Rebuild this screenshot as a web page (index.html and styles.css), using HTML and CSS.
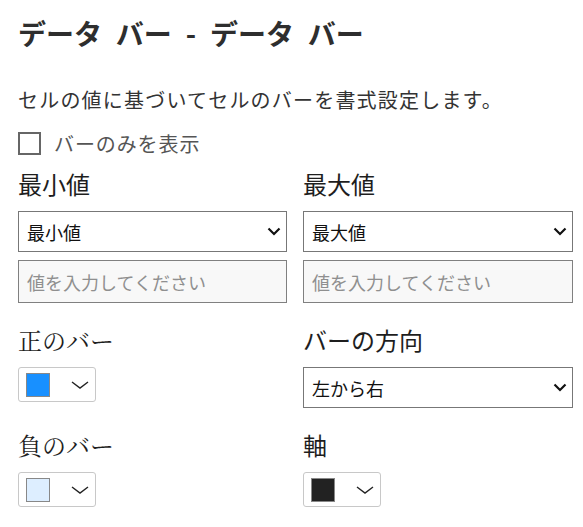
FILE: index.html
```html
<!DOCTYPE html>
<html lang="ja">
<head>
<meta charset="utf-8">
<link rel="stylesheet" href="styles.css">
</head>
<body>
<div class="panel">
  <h1 class="title">データ バー - データ バー</h1>
  <p class="desc">セルの値に基づいてセルのバーを書式設定します。</p>
  <label class="check-row"><span class="checkbox"></span><span class="check-label">バーのみを表示</span></label>
  <div class="grid">
    <div class="field">
      <div class="label">最小値</div>
      <div class="select"><span>最小値</span><svg class="chev" width="14" height="9" viewBox="0 0 14 9"><path d="M1.5 1.5 L7 7 L12.5 1.5" fill="none" stroke="#111" stroke-width="2.2"/></svg></div>
      <div class="input">値を入力してください</div>
    </div>
    <div class="field">
      <div class="label">最大値</div>
      <div class="select"><span>最大値</span><svg class="chev" width="14" height="9" viewBox="0 0 14 9"><path d="M1.5 1.5 L7 7 L12.5 1.5" fill="none" stroke="#111" stroke-width="2.2"/></svg></div>
      <div class="input">値を入力してください</div>
    </div>
    <div class="field">
      <div class="label serif">正のバー</div>
      <div class="picker"><span class="swatch swatch-pos"></span><svg class="chev-thin" width="18" height="8" viewBox="0 0 18 8"><path d="M1 1 L9 7 L17 1" fill="none" stroke="#222" stroke-width="1.4"/></svg></div>
    </div>
    <div class="field">
      <div class="label">バーの方向</div>
      <div class="select"><span>左から右</span><svg class="chev" width="14" height="9" viewBox="0 0 14 9"><path d="M1.5 1.5 L7 7 L12.5 1.5" fill="none" stroke="#111" stroke-width="2.2"/></svg></div>
    </div>
    <div class="field">
      <div class="label serif">負のバー</div>
      <div class="picker"><span class="swatch swatch-neg"></span><svg class="chev-thin" width="18" height="8" viewBox="0 0 18 8"><path d="M1 1 L9 7 L17 1" fill="none" stroke="#222" stroke-width="1.4"/></svg></div>
    </div>
    <div class="field">
      <div class="label">軸</div>
      <div class="picker"><span class="swatch swatch-axis"></span><svg class="chev-thin" width="18" height="8" viewBox="0 0 18 8"><path d="M1 1 L9 7 L17 1" fill="none" stroke="#222" stroke-width="1.4"/></svg></div>
    </div>
  </div>
</div>
</body>
</html>
```
FILE: styles.css
```css
html, body {
  margin: 0;
  padding: 0;
  background: #fff;
}
body {
  font-family: "Noto Sans CJK JP", "Noto Sans", sans-serif;
  color: #222;
}
.panel {
  padding: 13px 10px 0 18px;
}
.title {
  margin: 0;
  font-size: 28px;
  line-height: 40px;
  font-weight: 700;
  color: #2e2e2e;
  word-spacing: 7.5px;
}
.desc {
  margin: 32px 0 0 0;
  font-size: 20px;
  letter-spacing: 1.2px;
  line-height: 30px;
  color: #333;
}
.check-row {
  display: flex;
  align-items: center;
  gap: 13px;
  height: 30px;
  margin-top: 13px;
}
.checkbox {
  width: 19px;
  height: 19px;
  border: 2px solid #666;
  background: #fff;
}
.check-label {
  font-size: 20px;
  letter-spacing: 0.9px;
  color: #555;
}
.grid {
  display: grid;
  grid-template-columns: 269px 270px;
  column-gap: 16px;
  row-gap: 22px;
  margin-top: 11px;
}
.label {
  font-size: 24px;
  line-height: 29px;
  color: #1e1e1e;
  margin-bottom: 13px;
}
.label.serif {
  font-family: "Noto Serif CJK JP", "Liberation Serif", serif;
}
.select {
  height: 39px;
  border: 1px solid #777;
  display: flex;
  align-items: center;
  justify-content: space-between;
  padding: 0 5px 0 8px;
  font-size: 18px;
  color: #111;
  background: #fff;
}
.chev {
  display: block;
}
.input {
  margin-top: 8px;
  height: 41px;
  border: 1px solid #808080;
  background: #f8f8f8;
  display: flex;
  align-items: center;
  padding-left: 8px;
  font-size: 18px;
  color: #8f8f8f;
}
.picker {
  width: 69px;
  height: 33px;
  border: 1px solid #c8c8c8;
  border-radius: 3px;
  display: flex;
  align-items: center;
  padding-left: 7px;
  gap: 21px;
}
.swatch {
  width: 22px;
  height: 22px;
  border: 1px solid #888;
  display: block;
}
.swatch-pos { background: #1890ff; }
.swatch-neg { background: #ddeeff; }
.swatch-axis { background: #222222; }
.chev-thin { display: block; }
```
